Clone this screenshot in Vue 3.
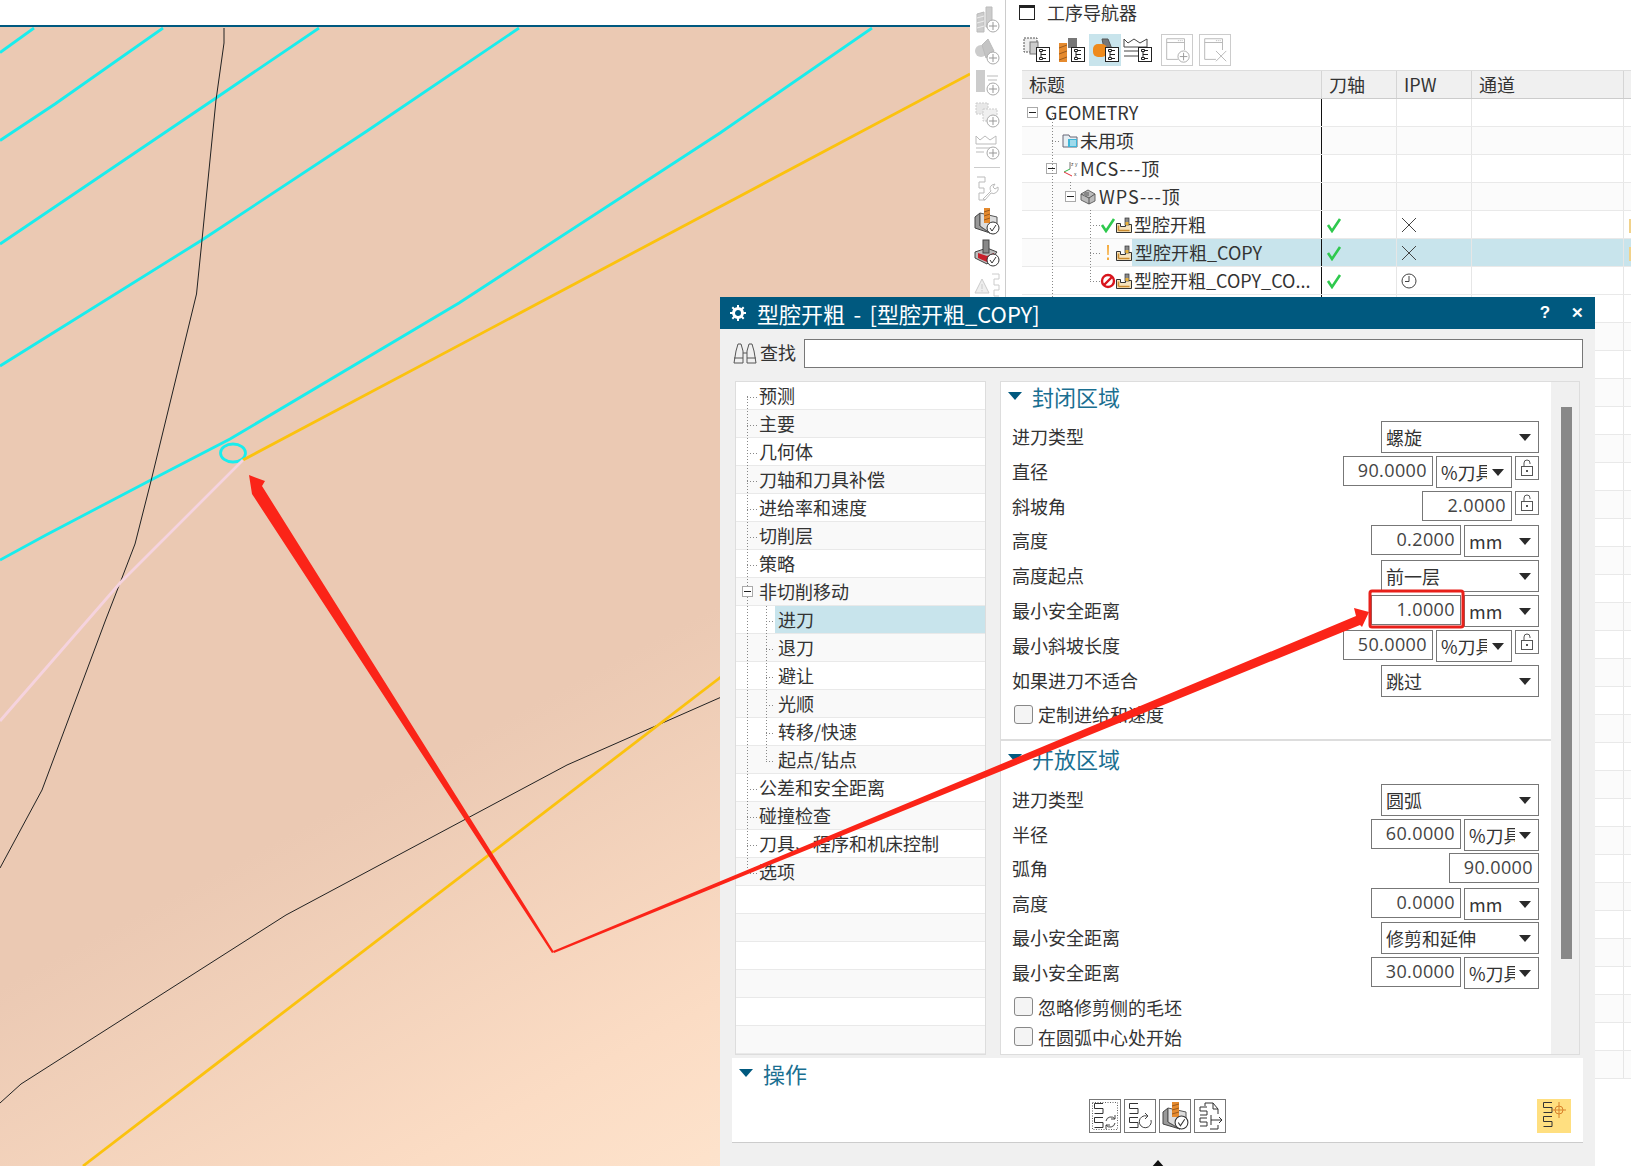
<script setup>
const navRows = [
  { text: 'GEOMETRY', pad: 5, minus: true, gap: 7 },
  { text: '未用项', pad: 40, icon: 'folder', gap: 2 },
  { text: 'MCS---顶', pad: 24, minus: true, icon: 'mcs', gap: 1, iconGap: 6, dashes: true },
  { text: 'WPS---顶', pad: 43, minus: true, icon: 'wps', gap: 3, iconGap: 4, dashes: true },
  { text: '型腔开粗', pad: 78, status: 'ok', icon: 'op', gap: 2, path: 'ok', ipw: 'cross', flag: true },
  { text: '型腔开粗_COPY', pad: 78, status: 'warn', icon: 'op', gap: 0, path: 'ok', ipw: 'cross', selected: true, flag: true },
  { text: '型腔开粗_COPY_CO...', pad: 78, status: 'stop', icon: 'op', gap: 2, path: 'ok', ipw: 'clock' }
]
const blankRows = 28

const treeItems = [
  { text: '预测' }, { text: '主要' }, { text: '几何体' }, { text: '刀轴和刀具补偿' },
  { text: '进给率和速度' }, { text: '切削层' }, { text: '策略' },
  { text: '非切削移动', open: true },
  { text: '进刀', child: true, selected: true }, { text: '退刀', child: true },
  { text: '避让', child: true }, { text: '光顺', child: true },
  { text: '转移/快速', child: true }, { text: '起点/钻点', child: true },
  { text: '公差和安全距离' }, { text: '碰撞检查' }, { text: '刀具、程序和机床控制' }, { text: '选项' },
  { text: '' }, { text: '' }, { text: '' }, { text: '' }, { text: '' }, { text: '' }
]

const sections = [
  {
    title: '封闭区域',
    cls: 'closed',
    rows: [
      { label: '进刀类型', select: '螺旋' },
      { label: '直径', num: '90.0000', unit: '%刀具', lock: true, wide: true },
      { label: '斜坡角', num: '2.0000', lock: true },
      { label: '高度', num: '0.2000', unit: 'mm' },
      { label: '高度起点', select: '前一层' },
      { label: '最小安全距离', num: '1.0000', unit: 'mm' },
      { label: '最小斜坡长度', num: '50.0000', unit: '%刀具', lock: true, wide: true },
      { label: '如果进刀不适合', select: '跳过' }
    ],
    checks: ['定制进给和速度']
  },
  {
    title: '开放区域',
    cls: 'open',
    rows: [
      { label: '进刀类型', select: '圆弧' },
      { label: '半径', num: '60.0000', unit: '%刀具' },
      { label: '弧角', num: '90.0000' },
      { label: '高度', num: '0.0000', unit: 'mm' },
      { label: '最小安全距离', select: '修剪和延伸' },
      { label: '最小安全距离', num: '30.0000', unit: '%刀具' }
    ],
    checks: ['忽略修剪侧的毛坯', '在圆弧中心处开始']
  }
]
</script>

<template>
  <div class="page">
    <svg class="defs" width="0" height="0">
      <symbol id="plus" viewBox="0 0 14 14">
        <circle cx="7" cy="7" r="6" fill="#fff" stroke="#aaa" />
        <path d="M7 3v8M3 7h8" stroke="#999" fill="none" />
      </symbol>
      <symbol id="okc" viewBox="0 0 14 14">
        <circle cx="7" cy="7" r="6" fill="#fff" stroke="#333" />
        <path d="M4 7l2 3 4-6" stroke="#333" fill="none" />
      </symbol>
      <symbol id="tree" viewBox="0 0 14 15">
        <rect x=".5" y=".5" width="13" height="14" fill="#fff" stroke="#222" />
        <path d="M3.500 2.500h3v2h-3zM3.500 10.500h3v2h-3zM5 4.500v6M6.500 3.500H10M6.500 11.500H10M5 7.500h5" fill="none" stroke="#222" />
      </symbol>
      <symbol id="op" viewBox="0 0 16 16">
        <path d="M.5 15.500V6.500h4v3h5V7.500h6v8z" fill="#f7e3bc" stroke="#333" />
        <path d="M2.500 13.500V8.500M2.500 13.500h11" fill="none" stroke="#c98a2d" stroke-width="1.600" />
        <rect x="9" y="1" width="4" height="7" fill="#8a8a8a" stroke="#333" stroke-width=".7" />
        <rect x="9.500" y="5" width="3" height="3" fill="#e8b13a" />
      </symbol>
      <symbol id="ok" viewBox="0 0 16 16">
        <path d="M2 8l4 6 8-12" fill="none" stroke="#2fc94e" stroke-width="2.600" />
      </symbol>
      <symbol id="warn" viewBox="0 0 16 16">
        <path d="M7 0h2l-.3 10H7.300zM7 12.500h2V15H7z" fill="#f5ab3c" />
      </symbol>
      <symbol id="stop" viewBox="0 0 16 16">
        <circle cx="8" cy="8" r="6" fill="none" stroke="#d8141c" stroke-width="2.400" />
        <path d="M3.500 12.500l9-9" stroke="#d8141c" stroke-width="2.400" />
      </symbol>
      <symbol id="cross" viewBox="0 0 16 16">
        <path d="M1 1l14 14M15 1L1 15" stroke="#444" fill="none" />
      </symbol>
      <symbol id="clock" viewBox="0 0 16 16">
        <circle cx="8" cy="8" r="7" fill="#fff" stroke="#444" />
        <path d="M8 3v5.500H4" stroke="#444" fill="none" />
      </symbol>
      <symbol id="folder" viewBox="0 0 16 16">
        <path d="M1 14V2h6l1 2h7v10z" fill="#e6eef3" stroke="#667" />
        <rect x="6" y="6" width="9" height="8" fill="#3fb5d8" />
        <path d="M8 8h6M8 10h6M8 12h6" stroke="#fff" />
      </symbol>
      <symbol id="wps" viewBox="0 0 16 16">
        <path d="M1 5l7-4 7 4v7l-6 3-8-4z" fill="#bbb" stroke="#666" />
        <path d="M1 5l8 4 6-4M9 9v6" fill="none" stroke="#555" />
        <rect x="4" y="3" width="5" height="4" fill="#888" />
      </symbol>
      <symbol id="lock" viewBox="0 0 14 18">
        <rect x="1.500" y="7.500" width="11" height="9" fill="#fff" stroke="#555" />
        <path d="M4 7.500V4a3 3 0 0 1 6 0v1" fill="none" stroke="#555" />
        <rect x="6" y="11" width="2" height="2" fill="#555" />
      </symbol>
      <symbol id="flow" viewBox="0 0 30 32">
        <path d="M13 3.500H4.500v5H13v5H4.500M13 17.500H4.500v5H13v5H4.500" fill="none" stroke="#333" />
      </symbol>
    </svg>

    <section class="canvas">
      <div class="canvas-top"></div>
      <svg class="model" viewBox="0 27 970 1139" width="970" height="1139">
        <g fill="none" stroke="#19eded" stroke-width="2.800">
          <path d="M0 52.500L34 28" />
          <path d="M0 140.500L55 104L163 28" />
          <path d="M0 244L216 98L319 28" />
          <path d="M0 366L202 240L367 131L519 28" />
          <path d="M0 560L46 535L149 481L230 439L459 303L720 133L872 28" />
          <ellipse cx="233" cy="453" rx="12.500" ry="9" />
        </g>
        <path d="M224 28V43L216 100L202 240L196.500 294L151.500 479L135 544L120 583L105.600 620L42 790L0 868" fill="none" stroke="#222" stroke-width="1" />
        <path d="M0 1103L21 1084L286 915L567 765L760 680" fill="none" stroke="#222" stroke-width="1" />
        <path d="M243 460L970 74" fill="none" stroke="#fbc20e" stroke-width="2.800" />
        <path d="M83 1166L760 647" fill="none" stroke="#fbc20e" stroke-width="2.800" />
        <path d="M243 460L120 583L0 721" fill="none" stroke="#f5d3de" stroke-width="2.800" />
      </svg>
    </section>

    <aside class="side-tools">
      <svg class="tool" viewBox="0 0 26 28">
        <path d="M3 9l7-2v20H3zM12 2h6v20h-6z" fill="#ccc" stroke="#bbb" />
        <path d="M3 13l7-2M3 18l7-2M3 23l7-2" stroke="#eee" />
        <use href="#plus" x="12" y="14" width="14" height="14" />
      </svg>
      <svg class="tool" viewBox="0 0 26 28">
        <circle cx="7" cy="14" r="6" fill="#ccc" />
        <path d="M8 8l6-6 6 12-8 7z" fill="#c4c4c4" stroke="#bbb" />
        <use href="#plus" x="12" y="14" width="14" height="14" />
      </svg>
      <svg class="tool" viewBox="0 0 26 28">
        <path d="M2 2h9v22H2z" fill="#ccc" />
        <path d="M13 8h11M14 12h9M15 16h6" stroke="#bbb" fill="none" />
        <use href="#plus" x="12" y="14" width="14" height="14" />
      </svg>
      <svg class="tool" viewBox="0 0 26 28">
        <rect x="2" y="3" width="12" height="11" fill="#e8e8e8" stroke="#ccc" stroke-dasharray="2 1" />
        <rect x="9" y="9" width="14" height="12" fill="#f0f0f0" stroke="#ccc" stroke-dasharray="2 1" />
        <use href="#plus" x="12" y="14" width="14" height="14" />
      </svg>
      <svg class="tool" viewBox="0 0 26 28">
        <path d="M2 4l4 4 5-4 5 4 6-4v8H2zM2 16h20M2 20h8" fill="none" stroke="#bbb" />
        <use href="#plus" x="12" y="14" width="14" height="14" />
      </svg>
      <div class="tool-sep"></div>
      <svg class="tool" viewBox="0 0 26 28">
        <path d="M3 2h8v5H5v6h5v5H5v7h6" fill="none" stroke="#bbb" />
        <path d="M9 24l8-8a4 4 0 0 1 1-6l3-1-2 3 2 2 3-2a5 5 0 0 1-7 6l-6 7z" fill="none" stroke="#bbb" />
      </svg>
      <svg class="tool" viewBox="0 0 26 28">
        <path d="M1 10l5-4v13l10 7-15-5z" fill="#999" stroke="#444" />
        <path d="M6 6l17 4v10l-7 6-10-7z" fill="#ddd" stroke="#555" />
        <rect x="10" y="1" width="6" height="15" fill="#e58a2e" />
        <path d="M10 5l6-2M10 9l6-2M10 13l6-2" stroke="#9c5a1c" />
        <use href="#okc" x="12" y="14" width="14" height="14" />
      </svg>
      <svg class="tool" viewBox="0 0 26 28">
        <path d="M1 13l12-4 10 4-10 12-12-6z" fill="#bbb" stroke="#444" />
        <path d="M4 14l9 3 7-3v5l-7 4-9-4z" fill="#c8202c" />
        <rect x="9" y="1" width="6" height="13" fill="#888" stroke="#444" />
        <use href="#okc" x="12" y="14" width="14" height="14" />
      </svg>
      <svg class="tool" viewBox="0 0 26 28">
        <path d="M1 22L8 8l7 14z" fill="#eee" stroke="#ccc" />
        <path d="M18 3h7v5h-5v6h5v5h-5v6h5" fill="none" stroke="#ccc" />
        <path d="M8 13v5M8 19v1.500" stroke="#ccc" />
      </svg>
    </aside>

    <section class="navigator">
      <div class="nav-title">
        <span class="win-icon"></span>
        <span>工序导航器</span>
      </div>
      <div class="nav-tools">
        <div class="nav-btn first">
          <svg viewBox="0 0 32 32" width="32" height="32">
            <rect x="3" y="4" width="13" height="14" fill="#eee" stroke="#555" stroke-dasharray="2 1" />
            <rect x="9" y="8" width="8" height="12" fill="#ccc" stroke="#777" />
            <use href="#tree" x="15" y="13" width="14" height="15" />
          </svg>
        </div>
        <div class="nav-btn">
          <svg viewBox="0 0 32 32" width="32" height="32">
            <rect x="3" y="9" width="8" height="19" fill="#e58a2e" />
            <path d="M3 14l8-3M3 20l8-3M3 26l8-3" stroke="#9c5a1c" />
            <rect x="12" y="4" width="9" height="10" fill="#777" />
            <use href="#tree" x="15" y="13" width="14" height="15" />
          </svg>
        </div>
        <div class="nav-btn active">
          <svg viewBox="0 0 32 32" width="32" height="32">
            <path d="M13 5h6l6 15-7 8z" fill="#777" stroke="#555" />
            <rect x="4" y="10" width="14" height="13" rx="5" fill="#ee8a1c" />
            <use href="#tree" x="16" y="13" width="14" height="15" />
          </svg>
        </div>
        <div class="nav-btn">
          <svg viewBox="0 0 32 32" width="32" height="32">
            <path d="M2 5l4 4 6-4 6 4 7-4v8H2zM2 17h14M2 22h14" fill="none" stroke="#444" />
            <use href="#tree" x="16" y="13" width="14" height="15" />
          </svg>
        </div>
        <div class="nav-btn boxed gap">
          <svg viewBox="0 0 32 32" width="30" height="30">
            <path d="M24 16V4H5v22h12M5 8h19" fill="none" stroke="#b5b5b5" />
            <path d="M17 6h5" stroke="#b5b5b5" stroke-dasharray="1 1" />
            <use href="#plus" x="16" y="16" width="14" height="14" />
          </svg>
        </div>
        <div class="nav-btn boxed">
          <svg viewBox="0 0 32 32" width="30" height="30">
            <path d="M24 16V4H5v22h12M5 8h19" fill="none" stroke="#b5b5b5" />
            <path d="M17 6h5" stroke="#b5b5b5" stroke-dasharray="1 1" />
            <path d="M17 17l11 11M28 17L17 28" stroke="#b5b5b5" fill="none" />
          </svg>
        </div>
      </div>

      <div class="table">
        <div class="t-row t-head">
          <div class="t-cell first">标题</div>
          <div class="t-cell">刀轴</div>
          <div class="t-cell">IPW</div>
          <div class="t-cell">通道</div>
          <div class="t-cell"></div>
        </div>
        <div v-for="(row, i) in navRows" :key="i" class="t-row" :class="{ alt: i % 2 === 1, sel: row.selected }">
          <div class="t-cell first tree-cell" :style="{ paddingLeft: row.pad + 'px' }">
            <span v-if="row.minus" class="minus"></span>
            <svg v-if="row.status" class="status"><use :href="'#' + row.status" /></svg>
            <svg v-if="row.icon === 'mcs'" class="node-icon" viewBox="0 0 16 16" :style="{ marginLeft: row.iconGap + 'px' }">
              <path d="M7 8V1" stroke="#777" fill="none" />
              <path d="M7 8l-6 3" stroke="#2fb34a" fill="none" />
              <path d="M1 11l8 4" stroke="#e0303a" fill="none" />
              <text x="8" y="5" font-size="5" fill="#444" font-family="Liberation Sans, sans-serif">z y</text>
              <text x="11" y="15" font-size="5" fill="#444" font-family="Liberation Sans, sans-serif">x</text>
            </svg>
            <svg v-else-if="row.icon" class="node-icon" :style="{ marginLeft: (row.iconGap || 0) + 'px' }"><use :href="'#' + row.icon" /></svg>
            <span class="node-text" :class="{ 'node-sel': row.selected, dashes: row.dashes }" :style="{ paddingLeft: (row.selected ? 3 : row.gap) + 'px' }">{{ row.text }}</span>
          </div>
          <div class="t-cell mark"><svg v-if="row.path" class="mark-icon"><use :href="'#' + row.path" /></svg></div>
          <div class="t-cell mark"><svg v-if="row.ipw" class="mark-icon"><use :href="'#' + row.ipw" /></svg></div>
          <div class="t-cell"></div>
          <div class="t-cell"><span v-if="row.flag" class="flag"></span></div>
        </div>
        <div v-for="n in blankRows" :key="'b' + n" class="t-row" :class="{ alt: n % 2 === 0 }">
          <div class="t-cell first"></div>
          <div class="t-cell"></div>
          <div class="t-cell"></div>
          <div class="t-cell"></div>
          <div class="t-cell"></div>
        </div>
        <svg class="guides" width="300" height="198">
          <g stroke="#888" stroke-dasharray="1 2" fill="none">
            <path d="M30.500 14V198M30 42.500h9M48.500 83V92" />
            <path d="M68.500 111V182.500M68 126.500h10M68 154.500h10M68 182.500h10" />
          </g>
        </svg>
      </div>
    </section>

    <div class="dialog">
      <header class="dlg-title">
        <svg class="gear" viewBox="0 0 16 16" width="16" height="16">
          <circle cx="8" cy="8" r="4.500" fill="none" stroke="#fff" stroke-width="3" />
          <path d="M8 0v3M8 13v3M0 8h3M13 8h3M2.300 2.300l2 2M11.700 11.700l2 2M2.300 13.700l2-2M11.700 4.300l2-2" stroke="#fff" stroke-width="2" />
        </svg>
        <span class="dlg-name">型腔开粗 - [型腔开粗_COPY]</span>
        <span class="dlg-btn help">?</span>
        <span class="dlg-btn close">✕</span>
      </header>

      <div class="search">
        <svg viewBox="0 0 26 24" width="26" height="24">
          <path d="M2 21h9V9L9 2H6L4 9zM15 21h9l-2-12-2-7h-3l-2 7zM11 11h4M2 16h9M15 16h9" fill="none" stroke="#555" />
        </svg>
        <span class="search-label">查找</span>
        <div class="search-input"></div>
      </div>

      <div class="dlg-body">
        <div class="steps">
          <div v-for="(item, i) in treeItems" :key="i" class="step" :class="{ even: i % 2 === 1, child: item.child }">
            <span v-if="item.open" class="minus step-minus"></span>
            <span class="step-text" :class="{ 'step-sel': item.selected }">{{ item.text }}</span>
          </div>
          <svg class="guides step-guides" width="60" height="510">
            <g stroke="#888" stroke-dasharray="1 2" fill="none">
              <path d="M11.500 14V490" />
              <path d="M30.500 224V378" />
              <path d="M11 15.500h10M11 43.500h10M11 71.500h10M11 99.500h10M11 127.500h10M11 155.500h10M11 183.500h10M11 407.500h10M11 435.500h10M11 463.500h10M11 491.500h10" />
              <path d="M30 239.500h9M30 267.500h9M30 295.500h9M30 323.500h9M30 351.500h9M30 379.500h9" />
            </g>
          </svg>
        </div>

        <div class="params">
          <div class="params-main">
            <div v-for="sec in sections" :key="sec.title" class="sec" :class="sec.cls">
              <div class="sec-head">
                <span class="tri"></span>
                <span>{{ sec.title }}</span>
              </div>
              <div v-for="(row, i) in sec.rows" :key="i" class="p-row">
                <span class="p-label">{{ row.label }}</span>
                <div class="p-ctrl">
                  <div v-if="row.select" class="select wide-select">
                    <span>{{ row.select }}</span>
                    <i class="caret"></i>
                  </div>
                  <template v-else>
                    <div class="num">{{ row.num }}</div>
                    <div v-if="row.unit" class="select" :class="row.wide ? 'unit-wide' : 'unit'">
                      <span class="unit-text">{{ row.unit }}</span>
                      <i class="caret"></i>
                    </div>
                    <div v-if="row.lock" class="lock">
                      <svg width="14" height="18"><use href="#lock" /></svg>
                    </div>
                  </template>
                </div>
              </div>
              <div v-for="c in sec.checks" :key="c" class="p-check">
                <span class="box"></span>
                <span>{{ c }}</span>
              </div>
            </div>
          </div>
          <div class="scroll"><div class="thumb"></div></div>
        </div>
      </div>

      <div class="ops">
        <div class="sec-head ops-head">
          <span class="tri"></span>
          <span>操作</span>
        </div>
        <div class="ops-row">
          <div class="ops-btns">
            <div class="op-btn">
              <svg viewBox="0 0 30 32" width="30" height="32">
                <rect x="2.500" y="2.500" width="25" height="27" fill="none" stroke="#666" stroke-dasharray="1 1.500" />
                <use href="#flow" />
                <path d="M16 21a5 5 0 0 1 9-2M25 23a5 5 0 0 1-9 2M25 15v4h-4M16 29v-4h4" fill="none" stroke="#444" />
              </svg>
            </div>
            <div class="op-btn">
              <svg viewBox="0 0 30 32" width="30" height="32">
                <use href="#flow" />
                <path d="M26 20a6 6 0 1 1-4-4M20 13l3 3-3 3" fill="none" stroke="#444" />
              </svg>
            </div>
            <div class="op-btn">
              <svg viewBox="0 0 30 32" width="30" height="32">
                <path d="M3 12l5-4v14l12 7-17-5z" fill="#999" stroke="#444" />
                <path d="M8 8l18 4v10l-6 7-12-7z" fill="#ddd" stroke="#555" />
                <rect x="12" y="2" width="7" height="15" fill="#e58a2e" />
                <path d="M12 6l7-2M12 10l7-2M12 14l7-2" stroke="#9c5a1c" />
                <use href="#okc" x="14" y="15" width="15" height="15" />
              </svg>
            </div>
            <div class="op-btn">
              <svg viewBox="0 0 30 32" width="30" height="32">
                <path d="M10 6V3h8l5 6v5M18 3v6h5M23 25v4h-8" fill="none" stroke="#333" />
                <path d="M12 7H5v4h7v4H5M12 18H5v4h7v4H5" fill="none" stroke="#333" />
                <path d="M16 15v10M16 20h11M24 17l3 3-3 3" fill="none" stroke="#333" />
              </svg>
            </div>
          </div>
          <div class="op-yellow">
            <svg viewBox="0 0 30 32" width="30" height="32">
              <use href="#flow" />
              <circle cx="20" cy="11" r="4" fill="none" stroke="#d9822b" />
              <path d="M20 3v16M13 11h14" stroke="#d9822b" />
            </svg>
          </div>
        </div>
      </div>
      <div class="collapse"></div>
    </div>

    <svg class="notes" viewBox="0 0 1631 1166" width="1631" height="1166">
      <polygon points="249,475 265,481 262,486 554,952 552,953 252,494" fill="#fb2418" />
      <polygon points="1369,612 1354,608 1356,616 553,951 554,953 1360,625 1362,627" fill="#fb2418" />
      <rect x="1370" y="591" width="93" height="36" rx="2" fill="none" stroke="#e8201a" stroke-width="3" />
    </svg>
  </div>
</template>

<style>
html,
body {
  margin: 0;
  background: #fff;
}
</style>

<style scoped>
* {
  box-sizing: border-box;
}

.page {
  position: relative;
  display: flex;
  width: 1631px;
  height: 1166px;
  overflow: hidden;
  background: #fff;
  color: #333;
  font-family: "Noto Sans CJK SC", "Noto Sans", sans-serif;
  font-size: 18px;
}

.defs {
  position: absolute;
}

.canvas {
  width: 970px;
  flex: none;
  display: flex;
  flex-direction: column;
}

.canvas-top {
  height: 27px;
  flex: none;
  background: #fff;
  border-bottom: 2px solid #00597f;
}

.model {
  display: block;
  flex: 1;
  background: linear-gradient(152deg, #ebc9b3 0%, #ebc9b3 58%, #fbdcc4 82%, #ffe8d2 100%);
}

.side-tools {
  width: 36px;
  flex: none;
  padding: 3px 2px 0 0;
  border-right: 1px solid #ccc;
  display: flex;
  flex-direction: column;
  align-items: center;
}

.tool {
  width: 26px;
  height: 28px;
  margin: 2px 0 1.700px;
  flex: none;
}

.tool-sep {
  width: 26px;
  height: 1px;
  margin: 6px 0 5px;
  background: #ccc;
}

.navigator {
  flex: 1;
  min-width: 0;
  padding-left: 16px;
}

.nav-title {
  height: 25px;
  display: flex;
  align-items: center;
  gap: 12px;
  margin-left: -3px;
  padding-bottom: 1px;
}

.win-icon {
  width: 16px;
  height: 15px;
  border: 1.500px solid #222;
  border-top-width: 3px;
}

.nav-tools {
  height: 45px;
  padding-top: 9px;
  display: flex;
  margin-left: -1px;
}

.nav-btn {
  width: 32px;
  height: 32px;
  margin-right: 1px;
}

.nav-btn.first {
  margin-left: 0;
  margin-right: 3px;
}

.nav-btn.active {
  background: #c8e4ec;
}

.nav-btn.boxed {
  border: 1px solid #ccc;
  margin-right: 6px;
}

.nav-btn.gap {
  margin-left: 6px;
}

.table {
  position: relative;
  border-top: 1px solid #ddd;
}

.t-row {
  display: grid;
  grid-template-columns: 300px 75px 75px 152px 1fr;
  height: 28px;
  background: #fff;
  border-bottom: 1px solid #e9e9e9;
}

.t-row.alt {
  background: #fbfbfb;
}

.t-row.t-head {
  background: #f0f0f0;
  border-bottom: 1px solid #ccc;
}

.t-cell {
  position: relative;
  border-right: 1px solid #e6e6e6;
  padding-left: 7px;
  line-height: 27px;
  white-space: nowrap;
}

.t-head .t-cell {
  border-right-color: #d5d5d5;
}

.t-row:not(.t-head) .t-cell.first {
  border-right-color: #111;
}

.t-row.sel .t-cell:not(.first) {
  background: #c8e4ec;
}

.tree-cell {
  display: flex;
  align-items: center;
  padding-right: 0;
}

.minus {
  position: relative;
  width: 11px;
  height: 11px;
  flex: none;
  border: 1px solid #aaa;
  background: #fff;
}

.minus::after {
  content: "";
  position: absolute;
  left: 1px;
  right: 1px;
  top: 4px;
  height: 1px;
  background: #222;
}

.status {
  width: 16px;
  height: 16px;
  flex: none;
}

.node-icon {
  width: 16px;
  height: 16px;
  flex: none;
}

.status + .node-icon {
  margin-left: 0;
}

.node-text {
  height: 100%;
  line-height: 27px;
}

.node-text.dashes {
  letter-spacing: 1px;
}

.node-sel {
  flex: 1;
  background: #c8e4ec;
}

.mark {
  padding-left: 4px;
  display: flex;
  align-items: center;
}

.mark-icon {
  width: 16px;
  height: 16px;
  margin-left: 0;
}

.flag {
  position: absolute;
  right: 0;
  top: 8px;
  width: 2px;
  height: 14px;
  background: #f1d28a;
}

.guides {
  position: absolute;
  left: 0;
  top: 28px;
  pointer-events: none;
}

.dialog {
  position: absolute;
  left: 720px;
  top: 297px;
  width: 875px;
  height: 869px;
  background: #f0f0f0;
}

.dlg-title {
  height: 32px;
  display: flex;
  align-items: center;
  padding-left: 10px;
  background: #00597f;
  color: #fff;
}

.gear {
  margin-right: 11px;
}

.dlg-name {
  flex: 1;
  font-size: 22px;
  line-height: 32px;
  word-spacing: 3.500px;
}

.dlg-btn {
  font-family: "Liberation Sans", sans-serif;
  font-weight: 700;
  font-size: 17px;
  width: 20px;
  text-align: center;
}

.dlg-btn.help {
  margin-right: 12px;
}

.dlg-btn.close {
  margin-right: 8px;
  font-size: 15px;
}

.search {
  height: 52px;
  display: flex;
  align-items: center;
  padding: 0 12px 3px 12px;
  gap: 2px;
}

.search-label {
  margin-bottom: 3px;
}

.search-input {
  flex: 1;
  height: 29px;
  margin-left: 6px;
  background: #fff;
  border: 1px solid #777;
}

.dlg-body {
  display: flex;
  height: 674px;
  padding-left: 15px;
  gap: 14px;
}

.steps {
  position: relative;
  width: 251px;
  height: 674px;
  background: #fff;
  border: 1px solid #ddd;
  overflow: hidden;
}

.step {
  position: relative;
  height: 28px;
  padding-left: 23px;
  display: flex;
  align-items: center;
  background: #fff;
  border-bottom: 1px solid #e9e9e9;
}

.step.even {
  background: #f9f9f9;
}

.step.child {
  padding-left: 39px;
}

.step-minus {
  position: absolute;
  left: 6px;
  top: 8px;
  z-index: 1;
}

.step-text {
  flex: 1;
  height: 27px;
  line-height: 27px;
  white-space: nowrap;
}

.step.child .step-text {
  padding-left: 3px;
}

.step-sel {
  background: #c8e4ec;
}

.step-guides {
  top: 0;
}

.params {
  display: flex;
  width: 580px;
  height: 674px;
  border: 1px solid #ddd;
  background: #fff;
}

.params-main {
  width: 550px;
  flex: none;
}

.scroll {
  flex: 1;
  padding: 25px 7px 0 10px;
  background: #f0f0f0;
}

.thumb {
  width: 11px;
  height: 552px;
  background: #888;
}

.sec.closed {
  height: 359px;
  border-bottom: 2px solid #ddd;
}

.sec-head {
  height: 39px;
  display: flex;
  align-items: center;
  gap: 10px;
  padding: 0 0 11px 7px;
  font-size: 22px;
  color: #1a6f91;
}

.sec.open .sec-head {
  height: 43px;
  padding-bottom: 10px;
}

.tri {
  width: 0;
  height: 0;
  border-left: 7px solid transparent;
  border-right: 7px solid transparent;
  border-top: 8px solid #00597f;
}

.p-row {
  height: 34.800px;
  display: flex;
  justify-content: space-between;
  align-items: flex-start;
  padding: 0 12px 0 11px;
}

.sec.open .p-row {
  height: 34.600px;
}

.p-label {
  line-height: 31px;
}

.p-ctrl {
  display: flex;
  align-items: flex-start;
  gap: 3px;
}

.select {
  position: relative;
  height: 32px;
  padding-left: 4px;
  background: #fff;
  border: 1px solid #777;
  line-height: 30px;
  white-space: nowrap;
}

.wide-select {
  width: 158px;
}

.unit {
  width: 75px;
}

.unit-wide {
  width: 76px;
}

.unit-text {
  display: block;
  width: 46px;
  overflow: hidden;
}

.caret {
  position: absolute;
  right: 7px;
  top: 12px;
  width: 0;
  height: 0;
  border-left: 6px solid transparent;
  border-right: 6px solid transparent;
  border-top: 7px solid #2a2a2a;
}

.num {
  width: 90px;
  height: 30px;
  padding-right: 5px;
  background: #fff;
  border: 1px solid #777;
  text-align: right;
  font-family: "Open Sans", "Noto Sans", sans-serif;
  font-size: 18px;
  letter-spacing: 0.400px;
  line-height: 27px;
  color: #444;
}

.lock {
  width: 24px;
  height: 24px;
  display: flex;
  align-items: center;
  justify-content: center;
  background: #fff;
  border: 1px solid #777;
}

.p-check {
  height: 30px;
  display: flex;
  align-items: center;
  gap: 5px;
  padding-left: 13px;
}

.box {
  width: 19px;
  height: 19px;
  border: 1px solid #888;
  border-radius: 3px;
  background: #f4f4f4;
}

.ops {
  height: 85px;
  margin: 3px 12px 0;
  background: #fff;
  border-bottom: 1px solid #ccc;
}

.ops-head {
  height: 36px;
  padding-bottom: 6px;
}

.ops-row {
  display: grid;
  grid-template-columns: 1fr auto 1fr;
  padding-top: 5px;
}

.ops-btns {
  grid-column: 2;
  display: flex;
  gap: 3px;
}

.op-btn {
  width: 32px;
  height: 34px;
  border: 1px solid #777;
}

.op-yellow {
  grid-column: 3;
  justify-self: end;
  width: 34px;
  height: 34px;
  margin-right: 12px;
  padding-left: 2px;
  background: #ffdf80;
}

.collapse {
  width: 0;
  height: 0;
  margin: 17px auto 0;
  border-left: 7px solid transparent;
  border-right: 7px solid transparent;
  border-bottom: 8px solid #111;
}

.notes {
  position: absolute;
  left: 0;
  top: 0;
  pointer-events: none;
}
</style>
